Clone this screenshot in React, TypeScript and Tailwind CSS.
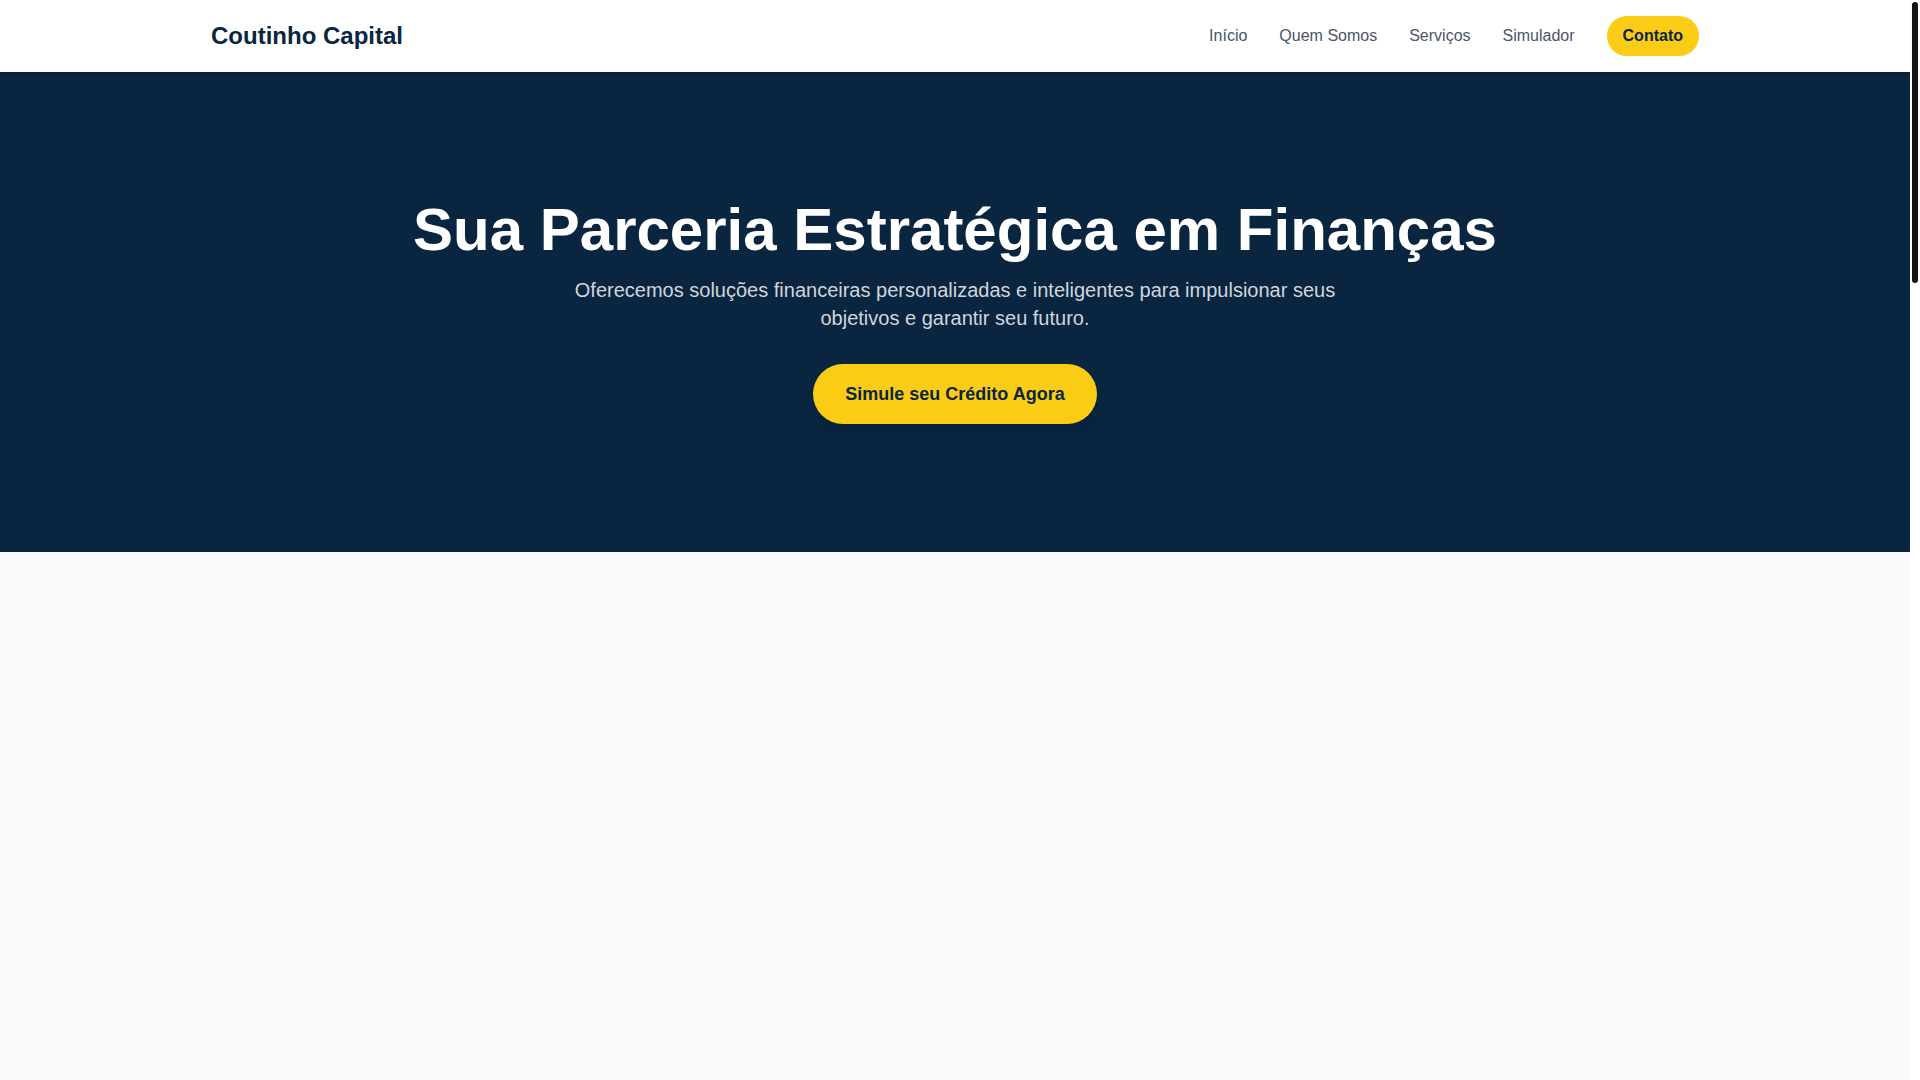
import React from "react";

export default function App() {
  return (
    <div className="flex bg-white font-['Liberation_Sans',Arial,sans-serif]">
      <div className="min-h-screen min-w-0 flex-1 bg-[#f8fafc]">
        <header className="sticky top-0 z-50 bg-white shadow-sm">
          <div className="mx-auto flex max-w-[1536px] items-center justify-between px-6 py-4">
            <a href="#" className="text-2xl font-bold text-[#0a2540]">
              Coutinho Capital
            </a>
            <nav className="flex items-center gap-8">
              <a href="#" className="text-base text-gray-600">Início</a>
              <a href="#" className="text-base text-gray-600">Quem Somos</a>
              <a href="#" className="text-base text-gray-600">Serviços</a>
              <a href="#" className="text-base text-gray-600">Simulador</a>
              <a href="#" className="rounded-full bg-[#facc15] px-4 py-2 text-base font-bold text-[#0a2540]">
                Contato
              </a>
            </nav>
          </div>
        </header>

        <section className="bg-[#0a2540] py-32 text-center">
          <div className="mx-auto max-w-[1536px] px-6">
            <h1 className="mb-4 text-6xl font-bold text-white">
              Sua Parceria Estratégica em Finanças
            </h1>
            <p className="mx-auto mb-8 max-w-3xl text-xl text-gray-300">
              Oferecemos soluções financeiras personalizadas e inteligentes para impulsionar seus objetivos e garantir seu futuro.
            </p>
            <a
              href="#"
              className="inline-block rounded-full bg-[#facc15] px-8 py-4 text-lg font-bold text-[#0a2540] shadow-lg"
            >
              Simule seu Crédito Agora
            </a>
          </div>
        </section>

        <main className="h-[3568px]" />
      </div>
      <aside className="w-[10px] shrink-0 bg-white">
        <div className="sticky top-0 px-[2px] pt-[2px]">
          <div className="h-[281px] w-[6px] rounded-full bg-[#141414]" />
        </div>
      </aside>
    </div>
  );
}
